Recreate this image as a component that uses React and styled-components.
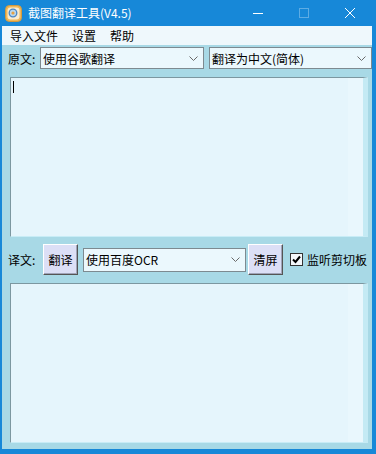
import React from 'react';
import styled, { createGlobalStyle } from 'styled-components';

const Global = createGlobalStyle`
  html, body { margin: 0; padding: 0; background: #1788d8; }
  body { font-family: "Noto Sans CJK SC", "Microsoft YaHei", sans-serif; font-size: 12px; color: #000; }
  * { box-sizing: border-box; }
`;

const Window = styled.div`
  width: 376px;
  height: 454px;
  display: flex;
  flex-direction: column;
  background: #1788d8;
`;

const TitleBar = styled.div`
  height: 26px;
  display: flex;
  align-items: center;
  padding: 0 3px 0 5px;
  color: #fff;
  flex-shrink: 0;
`;

const AppIcon = styled.div`
  width: 17px;
  height: 17px;
  margin-right: 6px;
  display: flex;
`;

const Title = styled.div`
  flex: 1;
  font-size: 12px;
  line-height: 26px;
`;

const CaptionButton = styled.div`
  width: 46px;
  height: 26px;
  display: flex;
  align-items: center;
  justify-content: center;
`;

const Frame = styled.div`
  flex: 1;
  display: flex;
  flex-direction: column;
  padding: 0 4px 5px 2px;
`;

const MenuBar = styled.div`
  height: 19px;
  background: #eff8fc;
  display: flex;
  align-items: center;
  padding-left: 1px;
  flex-shrink: 0;
`;

const MenuItem = styled.div`
  padding: 0 7px;
  line-height: 19px;
`;

const Client = styled.div`
  flex: 1;
  background: #a8d9e6;
  display: flex;
  flex-direction: column;
  padding: 2px 0 6px 4px;
`;

const Row = styled.div`
  display: flex;
  align-items: center;
  height: ${p => p.$h}px;
  margin-top: ${p => p.$mt || 0}px;
  flex-shrink: 0;
`;

const Label = styled.div`
  width: ${p => p.$w}px;
  padding-left: 2px;
  white-space: nowrap;
`;

const Combo = styled.div`
  width: ${p => p.$w}px;
  height: ${p => p.$h}px;
  margin-left: ${p => p.$ml || 0}px;
  border: 1px solid #7d8a90;
  background: #ebf8fd;
  display: flex;
  align-items: center;
  justify-content: space-between;
  padding: 0 5px 0 2px;
  white-space: nowrap;
`;

const Button = styled.div`
  width: 35px;
  height: 31px;
  margin-left: ${p => p.$ml || 0}px;
  background: #dcdff6;
  border-top: 1px solid #ffffff;
  border-left: 1px solid #ffffff;
  border-right: 1px solid #555;
  border-bottom: 1px solid #555;
  box-shadow: inset -1px -1px 0 #a0a4b8;
  display: flex;
  align-items: center;
  justify-content: center;
`;

const CheckBox = styled.div`
  width: 13px;
  height: 13px;
  margin-left: 7px;
  border: 1px solid #333;
  background: #f4f8fb;
  display: flex;
  align-items: center;
  justify-content: center;
`;

const CheckLabel = styled.div`
  margin-left: 4px;
  white-space: nowrap;
`;

const TextArea = styled.div`
  height: 160px;
  margin: ${p => p.$mt}px 4px 0 4px;
  flex-shrink: 0;
  border-left: 1px solid #7c97a0;
  border-top: 1px solid #7c97a0;
  border-right: 5px solid #c4eaf4;
  border-bottom: 1px solid #c8ecf6;
  background: linear-gradient(to right, #e5f5fc 0, #e5f5fc calc(100% - 15px), #e9f7fd calc(100% - 15px));
  padding: 3px 2px;
`;

const Caret = styled.div`
  width: 1px;
  height: 12px;
  background: #000;
`;

const Chevron = () => (
  <svg width="9" height="5" viewBox="0 0 9 5">
    <path d="M0.5 0.5 L4.5 4.5 L8.5 0.5" fill="none" stroke="#6a6a6a" strokeWidth="1" />
  </svg>
);

const Icon = () => (
  <svg width="17" height="17" viewBox="0 0 17 17">
    <rect x="0.5" y="0.5" width="16" height="16" rx="4" fill="#f0b85a" stroke="#d39a3e" />
    <rect x="2.5" y="2.5" width="12" height="12" rx="3" fill="#f8ecd2" />
    <circle cx="8" cy="8" r="3.8" fill="#b8d8ef" stroke="#4a86c6" strokeWidth="1.3" />
    <circle cx="8" cy="8" r="1.6" fill="#e6a040" />
  </svg>
);

export default function App() {
  return (
    <>
      <Global />
      <Window>
        <TitleBar>
          <AppIcon><Icon /></AppIcon>
          <Title>截图翻译工具(V4.5)</Title>
          <CaptionButton>
            <svg width="10" height="10" viewBox="0 0 10 10">
              <path d="M0 5.5 H10" stroke="#fff" strokeWidth="1" />
            </svg>
          </CaptionButton>
          <CaptionButton>
            <svg width="10" height="10" viewBox="0 0 10 10">
              <rect x="0.5" y="0.5" width="9" height="9" fill="none" stroke="rgba(255,255,255,0.3)" />
            </svg>
          </CaptionButton>
          <CaptionButton>
            <svg width="10" height="10" viewBox="0 0 10 10">
              <path d="M0 0 L10 10 M10 0 L0 10" stroke="#fff" strokeWidth="1" />
            </svg>
          </CaptionButton>
        </TitleBar>
        <Frame>
          <MenuBar>
            <MenuItem>导入文件</MenuItem>
            <MenuItem>设置</MenuItem>
            <MenuItem>帮助</MenuItem>
          </MenuBar>
          <Client>
            <Row $h={22}>
              <Label $w={34}>原文:</Label>
              <Combo $w={164} $h={22}>
                <span>使用谷歌翻译</span>
                <Chevron />
              </Combo>
              <Combo $w={163} $h={22} $ml={5}>
                <span>翻译为中文(简体)</span>
                <Chevron />
              </Combo>
            </Row>
            <TextArea $mt={8}>
              <Caret />
            </TextArea>
            <Row $h={31} $mt={7}>
              <Label $w={37}>译文:</Label>
              <Button>翻译</Button>
              <Combo $w={163} $h={24} $ml={5}>
                <span>使用百度OCR</span>
                <Chevron />
              </Combo>
              <Button $ml={2}>清屏</Button>
              <CheckBox>
                <svg width="9" height="9" viewBox="0 0 9 9">
                  <path d="M1 4.5 L3.5 7 L8 1.5" fill="none" stroke="#000" strokeWidth="2" />
                </svg>
              </CheckBox>
              <CheckLabel>监听剪切板</CheckLabel>
            </Row>
            <TextArea $mt={8} />
          </Client>
        </Frame>
      </Window>
    </>
  );
}
